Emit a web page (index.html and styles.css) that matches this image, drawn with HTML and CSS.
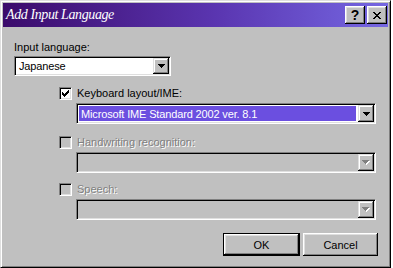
FILE: index.html
```html
<!DOCTYPE html>
<html>
<head>
<meta charset="utf-8">
<link rel="stylesheet" href="styles.css">
</head>
<body>
<div class="window">
  <div class="titlebar">
    <span class="title">Add Input Language</span>
    <div class="tbtns">
      <span class="tbtn">?</span>
      <span class="tbtn">
        <svg width="8" height="7" viewBox="0 0 8 7" shape-rendering="crispEdges"><path d="M0 0h2v1h-2zM6 0h2v1h-2zM1 1h2v1h-2zM5 1h2v1h-2zM2 2h4v1h-4zM3 3h2v1h-2zM2 4h4v1h-4zM1 5h2v1h-2zM5 5h2v1h-2zM0 6h2v1h-2zM6 6h2v1h-2z" fill="#000"/></svg>
      </span>
    </div>
  </div>
  <div class="content">
    <div class="label">Input language:</div>
    <div class="combo lang">
      <span class="value">Japanese</span>
      <span class="dd"><svg width="7" height="4" viewBox="0 0 7 4" shape-rendering="crispEdges"><path d="M0 0h7v1h-7zM1 1h5v1h-5zM2 2h3v1h-3zM3 3h1v1h-1z" fill="#000"/></svg></span>
    </div>
    <div class="group">
      <div class="check-row r1">
        <span class="cb"><svg width="7" height="7" viewBox="0 0 7 7" shape-rendering="crispEdges"><path d="M6 0h1v1h-1zM5 1h2v1h-2zM0 2h1v1h-1zM4 2h3v1h-3zM0 3h2v1h-2zM3 3h3v1h-3zM0 4h5v1h-5zM1 5h3v1h-3zM2 6h1v1h-1z" fill="#000"/></svg></span>
        <span class="cblabel">Keyboard layout/IME:</span>
      </div>
      <div class="combo wide">
        <span class="value sel">Microsoft IME Standard 2002 ver. 8.1</span>
        <span class="dd"><svg width="7" height="4" viewBox="0 0 7 4" shape-rendering="crispEdges"><path d="M0 0h7v1h-7zM1 1h5v1h-5zM2 2h3v1h-3zM3 3h1v1h-1z" fill="#000"/></svg></span>
      </div>
      <div class="check-row r2 disabled">
        <span class="cb off"></span>
        <span class="cblabel">Handwriting recognition:</span>
      </div>
      <div class="combo wide off">
        <span class="value"></span>
        <span class="dd"><svg width="8" height="5" viewBox="0 0 8 5" shape-rendering="crispEdges"><path d="M1 1h7v1h-7zM2 2h5v1h-5zM3 3h3v1h-3zM4 4h1v1h-1z" fill="#fff"/><path d="M0 0h7v1h-7zM1 1h5v1h-5zM2 2h3v1h-3zM3 3h1v1h-1z" fill="#808080"/></svg></span>
      </div>
      <div class="check-row r3 disabled">
        <span class="cb off"></span>
        <span class="cblabel">Speech:</span>
      </div>
      <div class="combo wide off">
        <span class="value"></span>
        <span class="dd"><svg width="8" height="5" viewBox="0 0 8 5" shape-rendering="crispEdges"><path d="M1 1h7v1h-7zM2 2h5v1h-5zM3 3h3v1h-3zM4 4h1v1h-1z" fill="#fff"/><path d="M0 0h7v1h-7zM1 1h5v1h-5zM2 2h3v1h-3zM3 3h1v1h-1z" fill="#808080"/></svg></span>
      </div>
    </div>
    <div class="buttons">
      <div class="btn default"><span>OK</span></div>
      <div class="btn"><span>Cancel</span></div>
    </div>
  </div>
</div>
</body>
</html>
```

FILE: styles.css
```css
html, body {
  margin: 0;
  padding: 0;
  background: #ffffff;
  font-family: "Liberation Sans", Arial, sans-serif;
  font-size: 11px;
  color: #000;
}

.window {
  box-sizing: border-box;
  width: 391px;
  height: 268px;
  background: #c0c0c0;
  border: 1px solid;
  border-color: #dfdfdf #000 #000 #dfdfdf;
  box-shadow: inset 1px 1px #fff, inset -1px -1px #808080;
  padding: 2px;
  display: flex;
  flex-direction: column;
}

.titlebar {
  height: 24px;
  flex: none;
  display: flex;
  align-items: center;
  justify-content: space-between;
  padding: 0 1px 0 3px;
  background: linear-gradient(to right, #3b0b6b 0%, #5a35b0 55%, #7567e2 100%);
}

.title {
  font-family: "Liberation Serif", "DejaVu Serif", serif;
  font-style: italic;
  font-size: 14px;
  color: #fff;
  letter-spacing: -0.4px;
  line-height: 24px;
}

.tbtns {
  display: flex;
  gap: 2px;
}

.tbtn {
  box-sizing: border-box;
  width: 20px;
  height: 18px;
  display: flex;
  align-items: center;
  justify-content: center;
  background: #c0c0c0;
  box-shadow: inset -1px -1px #000, inset 1px 1px #fff, inset -2px -2px #808080, inset 2px 2px #dfdfdf;
  font-family: "Liberation Sans", Arial, sans-serif;
  font-weight: bold;
  font-size: 14px;
  line-height: 1;
}

.content {
  flex: 1;
  padding: 14px 10px 0 11px;
  display: flex;
  flex-direction: column;
}

.label {
  line-height: 13px;
  height: 13px;
  margin-bottom: 2px;
}

.combo {
  box-sizing: border-box;
  display: flex;
  align-items: center;
  background: #fff;
  border: 1px solid;
  border-color: #808080 #fff #fff #808080;
  box-shadow: inset 1px 1px #000, inset -1px -1px #dfdfdf;
  padding: 1px;
}

.combo.lang {
  width: 157px;
  height: 20px;
}

.combo.wide {
  width: 300px;
  height: 21px;
  margin-left: 17px;
  margin-top: 3px;
}

.combo.off {
  background: #c0c0c0;
}

.value {
  flex: 1;
  align-self: stretch;
  display: flex;
  align-items: center;
  padding-left: 2px;
  margin: 1px 2px 1px 1px;
  white-space: nowrap;
  letter-spacing: -0.15px;
}

.value.sel {
  background: #6b4fe0;
  color: #fff;
}

.dd {
  box-sizing: border-box;
  width: 16px;
  align-self: stretch;
  display: flex;
  align-items: center;
  justify-content: center;
  background: #c0c0c0;
  box-shadow: inset -1px -1px #000, inset 1px 1px #dfdfdf, inset -2px -2px #808080, inset 2px 2px #fff;
}

.group {
  margin-left: 45px;
  display: flex;
  flex-direction: column;
}

.check-row {
  height: 13px;
  display: flex;
  align-items: center;
  gap: 5px;
}

.check-row.r1 { margin-top: 11px; }
.check-row.r2 { margin-top: 12px; }
.check-row.r3 { margin-top: 10px; }

.cb {
  box-sizing: border-box;
  width: 13px;
  height: 13px;
  flex: none;
  display: flex;
  align-items: center;
  justify-content: center;
  background: #fff;
  border: 1px solid;
  border-color: #808080 #fff #fff #808080;
  box-shadow: inset 1px 1px #000, inset -1px -1px #dfdfdf;
}

.cb.off {
  background: #c0c0c0;
}

.cblabel {
  line-height: 13px;
}

.disabled .cblabel {
  color: #808080;
  text-shadow: 1px 1px 0 #fff;
}

.buttons {
  margin-top: 13px;
  display: flex;
  justify-content: flex-end;
  gap: 3px;
}

.btn {
  box-sizing: border-box;
  width: 75px;
  height: 23px;
  display: flex;
  align-items: center;
  justify-content: center;
  background: #c0c0c0;
  box-shadow: inset -1px -1px #000, inset 1px 1px #fff, inset -2px -2px #808080, inset 2px 2px #dfdfdf;
}

.btn.default {
  width: 77px;
  border: 1px solid #000;
}
```
